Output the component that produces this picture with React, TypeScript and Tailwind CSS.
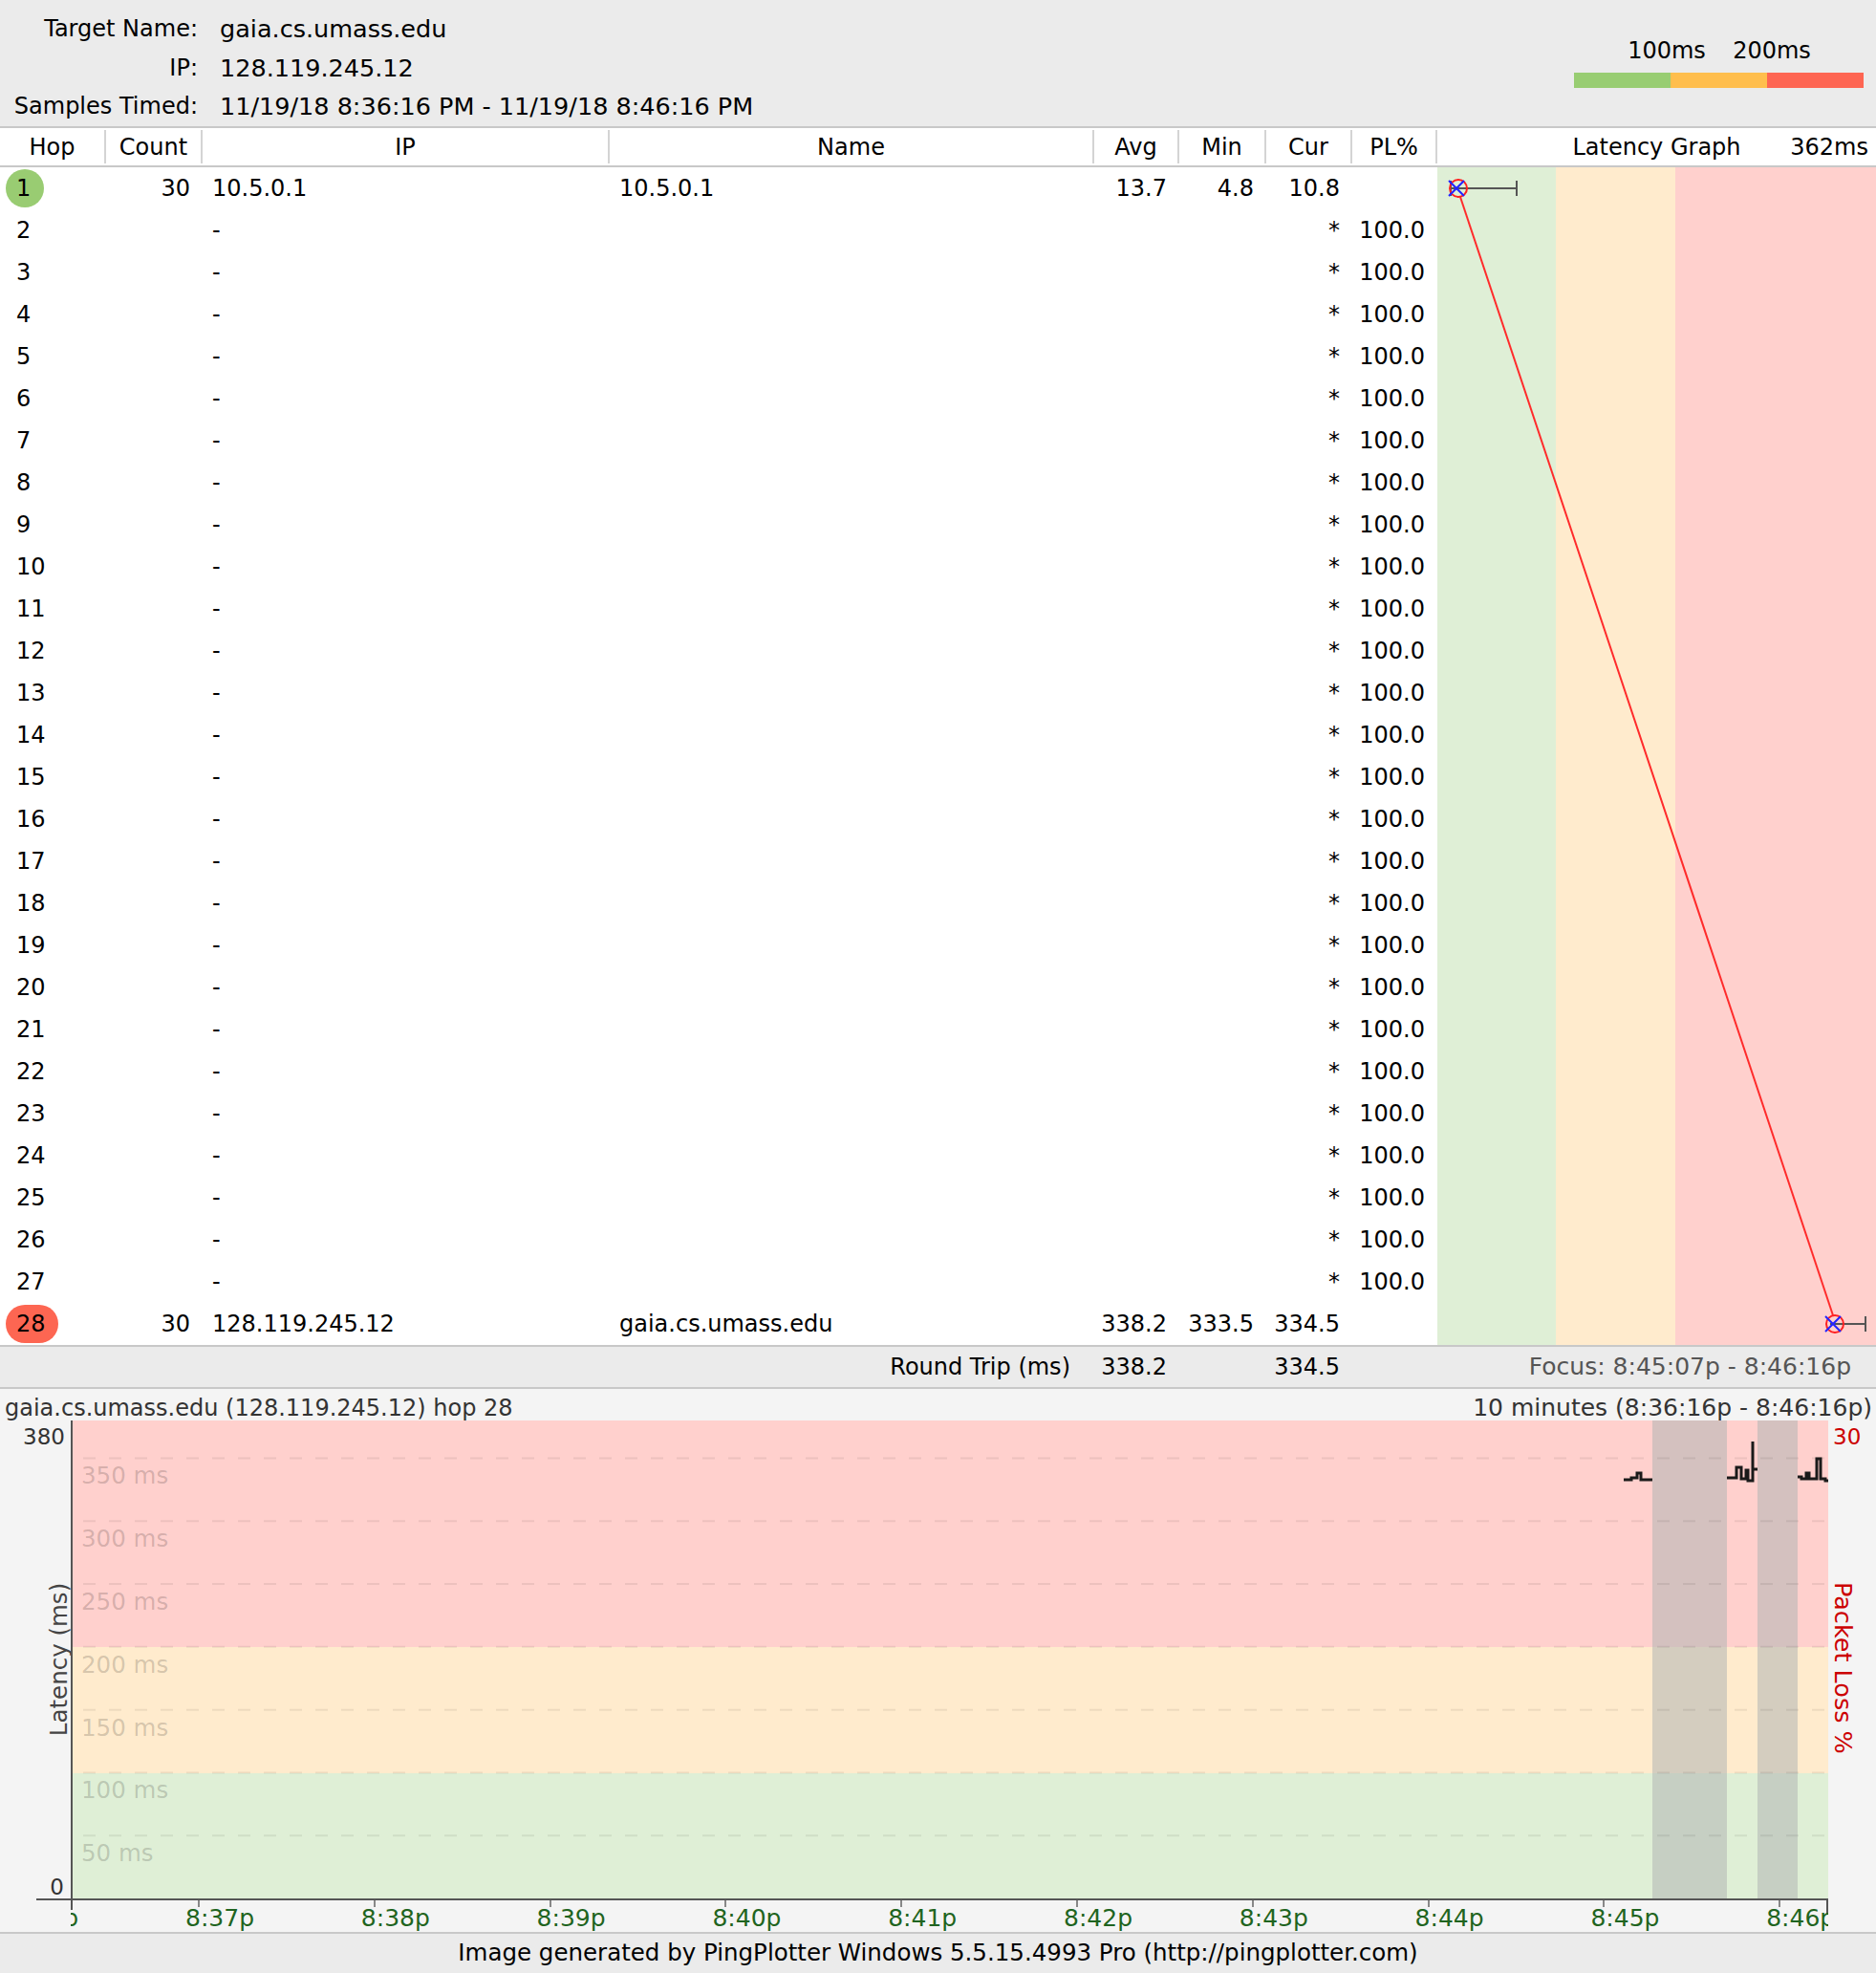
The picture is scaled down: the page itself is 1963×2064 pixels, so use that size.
import React from "react"

// column layout of the hop table (widths include the 2px separator)
const cols = [
  { label: "Hop", w: "w-[111px]" },
  { label: "Count", w: "w-[101px]" },
  { label: "IP", w: "w-[426px]" },
  { label: "Name", w: "w-[507px]" },
  { label: "Avg", w: "w-[89px]" },
  { label: "Min", w: "w-[91px]" },
  { label: "Cur", w: "w-[90px]" },
  { label: "PL%", w: "w-[89px]" },
]

interface Hop {
  hop: number
  count?: string
  ip: string
  name?: string
  avg?: string
  min?: string
  cur: string
  pl?: string
  badge?: string
}

const hops: Hop[] = Array.from({ length: 28 }, (_, i) => {
  const n = i + 1
  if (n === 1)
    return { hop: 1, count: "30", ip: "10.5.0.1", name: "10.5.0.1", avg: "13.7", min: "4.8", cur: "10.8", badge: "bg-[#99cc72]" }
  if (n === 28)
    return { hop: 28, count: "30", ip: "128.119.245.12", name: "gaia.cs.umass.edu", avg: "338.2", min: "333.5", cur: "334.5", badge: "bg-[#fd6652]" }
  return { hop: n, ip: "-", cur: "*", pl: "100.0" }
})

const gridLines = [350, 300, 250, 200, 150, 100, 50]
const minuteLabels = ["8:36p", "8:37p", "8:38p", "8:39p", "8:40p", "8:41p", "8:42p", "8:43p", "8:44p", "8:45p", "8:46p"]

function Header() {
  return (
    <div className="h-[134px] shrink-0 bg-[#ebebeb] border-b-2 border-[#c8c8c8] flex justify-between">
      <div className="grid grid-cols-[207px_auto] gap-x-[23px] pt-[10px] text-[24px] leading-[40px]">
        <span className="text-right">Target Name:</span>
        <span className="text-[25.5px]">gaia.cs.umass.edu</span>
        <span className="text-right">IP:</span>
        <span className="text-[25.5px]">128.119.245.12</span>
        <span className="text-right">Samples Timed:</span>
        <span className="text-[25.5px]">11/19/18 8:36:16 PM - 11/19/18 8:46:16 PM</span>
      </div>
      <div className="w-[303px] mr-[13px] pt-[39px]">
        <div className="flex pl-[42px] text-[24px] leading-[28px]">
          <span className="w-[110px] text-center">100ms</span>
          <span className="w-[110px] text-center">200ms</span>
        </div>
        <div className="mt-[9px] flex h-[16px]">
          <div className="w-[101px] bg-[#98cd72]" />
          <div className="w-[101px] bg-[#ffbe4d]" />
          <div className="flex-1 bg-[#fe6552]" />
        </div>
      </div>
    </div>
  )
}

function LatencyColumn() {
  const y1 = 22
  const y28 = 27 * 44 + 22
  return (
    <div className="relative flex-1">
      <div className="flex h-full">
        <div className="w-[124px] bg-[#dfefd6]" />
        <div className="w-[125px] bg-[#ffebcd]" />
        <div className="flex-1 bg-[#ffd0cd]" />
      </div>
      <svg className="absolute inset-0" width="459" height="1232">
        <line x1="24" y1={y1 + 9} x2="414" y2={y28 - 9} stroke="#ff2b2b" strokeWidth="2" />
        {/* hop 1 */}
        <line x1="14" y1={y1} x2="83" y2={y1} stroke="#555" strokeWidth="2" />
        <line x1="14" y1={y1 - 8} x2="14" y2={y1 + 8} stroke="#555" strokeWidth="2" />
        <line x1="83" y1={y1 - 8} x2="83" y2={y1 + 8} stroke="#555" strokeWidth="2" />
        <circle cx="22" cy={y1} r="9" fill="none" stroke="#ff2020" strokeWidth="2" />
        <path d={`M12 ${y1 - 8} L28 ${y1 + 8} M12 ${y1 + 8} L28 ${y1 - 8}`} stroke="#2424ff" strokeWidth="2" />
        {/* hop 28 */}
        <line x1="411" y1={y28} x2="448" y2={y28} stroke="#555" strokeWidth="2" />
        <line x1="448" y1={y28 - 8} x2="448" y2={y28 + 8} stroke="#555" strokeWidth="2" />
        <circle cx="416" cy={y28} r="9" fill="none" stroke="#ff2020" strokeWidth="2" />
        <path d={`M406 ${y28 - 8} L422 ${y28 + 8} M406 ${y28 + 8} L422 ${y28 - 8}`} stroke="#2424ff" strokeWidth="2" />
      </svg>
    </div>
  )
}

function HopTable() {
  return (
    <>
      <div className="h-[41px] shrink-0 flex border-b-2 border-[#c8c8c8] text-[24px]">
        {cols.map((c) => (
          <div key={c.label} className={`${c.w} h-full py-[2px]`}>
            <div className="h-full border-r-2 border-[#d4d4d4] flex items-center justify-center">{c.label}</div>
          </div>
        ))}
        <div className="flex-1 grid grid-cols-[1fr_auto_1fr] items-center">
          <span />
          <span>Latency Graph</span>
          <span className="text-right pr-[8px]">362ms</span>
        </div>
      </div>
      <div className="h-[1232px] shrink-0 flex text-[24px]">
        <div className="w-[1504px] flex flex-col">
          {hops.map((h) => (
            <div key={h.hop} className="h-[44px] flex items-center">
              <div className="w-[111px] pl-[6px]">
                {h.badge ? (
                  <span className={`inline-flex items-center h-[40px] min-w-[40px] rounded-full pl-[11px] pr-[13px] ${h.badge}`}>{h.hop}</span>
                ) : (
                  <span className="pl-[11px]">{h.hop}</span>
                )}
              </div>
              <div className="w-[101px] text-right pr-[13px]">{h.count}</div>
              <div className="w-[426px] pl-[10px]">{h.ip}</div>
              <div className="w-[507px] pl-[10px]">{h.name}</div>
              <div className="w-[89px] text-right pr-[13px]">{h.avg}</div>
              <div className="w-[91px] text-right pr-[13px]">{h.min}</div>
              <div className="w-[90px] text-right pr-[13px]">{h.cur}</div>
              <div className="w-[89px] text-right pr-[13px]">{h.pl}</div>
            </div>
          ))}
        </div>
        <LatencyColumn />
      </div>
    </>
  )
}

function RoundTrip() {
  return (
    <div className="h-[46px] shrink-0 flex items-center bg-[#ebebeb] border-y-2 border-[#c8c8c8] text-[24px]">
      <div className="w-[1145px] text-right pr-[25px]">Round Trip (ms)</div>
      <div className="w-[89px] text-right pr-[13px]">338.2</div>
      <div className="w-[91px]" />
      <div className="w-[90px] text-right pr-[13px]">334.5</div>
      <div className="w-[89px]" />
      <div className="flex-1 text-right pr-[26px] text-[25px] text-[#555]">Focus: 8:45:07p - 8:46:16p</div>
    </div>
  )
}

function TimeGraph() {
  const yOf = (ms: number) => 500 - (ms * 500) / 380
  return (
    <div className="h-[568px] shrink-0 bg-[#f4f4f4] flex flex-col text-[#333]">
      <div className="h-[33px] pt-[7px] flex items-center justify-between pl-[5px] pr-[4px]">
        <span className="text-[24px]">gaia.cs.umass.edu (128.119.245.12) hop 28</span>
        <span className="text-[25px]">10 minutes (8:36:16p - 8:46:16p)</span>
      </div>

      <div className="flex h-[500px]">
        <div className="relative w-[74px]">
          <span className="absolute right-[6px] top-[4px] text-[23px] leading-[26px]">380</span>
          <span className="absolute right-[7px] top-[475px] text-[23px] leading-[26px]">0</span>
          <span className="absolute left-[47px] top-1/2 -translate-y-1/2 [writing-mode:vertical-rl] rotate-180 text-[24.5px] leading-[30px] text-[#444] whitespace-nowrap">
            Latency (ms)
          </span>
        </div>

        <div className="relative w-[1839px] border-l-2 border-[#555] overflow-hidden">
          <div className="flex flex-col h-full">
            <div className="h-[237px] bg-[#ffd0cd]" />
            <div className="h-[132px] bg-[#ffebcd]" />
            <div className="flex-1 bg-[#dfefd6]" />
          </div>
          <div className="absolute top-0 bottom-0 left-[1653px] w-[78px] bg-[rgba(176,180,180,0.55)]" />
          <div className="absolute top-0 bottom-0 left-[1763px] w-[42px] bg-[rgba(176,180,180,0.55)]" />
          <svg className="absolute inset-0" width="1837" height="500">
            {gridLines.map((ms) => (
              <line key={ms} x1="11" y1={yOf(ms)} x2="1837" y2={yOf(ms)} stroke="rgba(0,0,0,0.07)" strokeWidth="2" strokeDasharray="13 14" />
            ))}
            <g fill="none" stroke="#1a1a1a" strokeWidth="3" transform="translate(-2,0)">
              <polyline points="1625,62 1633,62 1633,60 1639,60 1639,55 1643,55 1643,62 1655,62" />
              <polyline points="1733,60 1743,60 1743,49 1748,49 1748,61 1753,61 1753,52 1755,52 1755,63 1760,63 1760,22 1760,51 1765,51" />
              <polyline points="1807,59 1811,59 1811,61 1816,61 1816,55 1819,55 1819,61 1827,61 1827,40 1831,40 1831,61 1836,61 1836,63 1839,63" />
            </g>
          </svg>
          {gridLines.map((ms) => (
            <span
              key={ms}
              className="absolute left-[9px] text-[24.5px] leading-[26px] text-[rgba(0,0,0,0.18)]"
              style={{ top: yOf(ms) + 6 }}
            >
              {ms} ms
            </span>
          ))}
        </div>

        <div className="relative flex-1">
          <span className="absolute left-[5px] top-[4px] text-[23px] leading-[26px] text-[#cc0000]">30</span>
          <span className="absolute left-[1px] top-[169px] [writing-mode:vertical-rl] text-[25.5px] leading-[30px] text-[#cc0000] whitespace-nowrap">
            Packet Loss %
          </span>
        </div>
      </div>

      <div className="h-[35px]">
        <div className="ml-[38px] w-[1875px] h-[2px] bg-[#555]" />
        <div className="relative ml-[74px] w-[1839px] h-[33px] overflow-hidden">
          <div className="absolute left-0 top-0 w-[2px] h-[10px] bg-[#555]" />
          <div className="absolute right-0 top-0 w-[2px] h-[15px] bg-[#555]" />
          {minuteLabels.map((t, i) => {
            const x = 133 + (i - 1) * 183.8
            return (
              <React.Fragment key={t}>
                <div className="absolute top-0 w-[2px] h-[7px] bg-[#888]" style={{ left: x }} />
                <span className="absolute top-[5px] text-[25px] leading-[28px] text-[#1f6420] whitespace-nowrap" style={{ left: x - 13 }}>
                  {t}
                </span>
              </React.Fragment>
            )
          })}
        </div>
      </div>
    </div>
  )
}

function Footer() {
  return (
    <div className="h-[43px] shrink-0 bg-[#ebebeb] border-t-2 border-[#c8c8c8] flex items-center justify-center text-[24.5px]">
      Image generated by PingPlotter Windows 5.5.15.4993 Pro (http://pingplotter.com)
    </div>
  )
}

export default function App() {
  return (
    <div className="w-[1963px] h-[2064px] flex flex-col bg-white text-black font-['DejaVu_Sans',sans-serif] overflow-hidden">
      <Header />
      <HopTable />
      <RoundTrip />
      <TimeGraph />
      <Footer />
    </div>
  )
}
